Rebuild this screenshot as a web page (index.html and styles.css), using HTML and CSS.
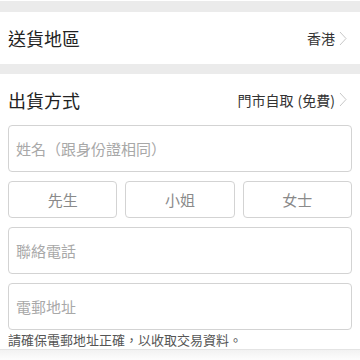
FILE: index.html
```html
<!DOCTYPE html>
<html lang="zh-Hant">
<head>
    <title>送貨資料</title>
    <meta charset="utf-8">
    <link rel="stylesheet" href="styles.css">
</head>
<body>
    <div class="sep sep-top"></div>
    <div class="linha">
        <span class="titulo">送貨地區</span>
        <span class="valor">香港
            <svg class="seta" width="8" height="15" viewBox="0 0 8 15"><polyline points="1,1 7,7.5 1,14" fill="none" stroke="#c8c8c8" stroke-width="1"/></svg>
        </span>
    </div>
    <div class="sep"></div>
    <div class="linha linha-2">
        <span class="titulo">出貨方式</span>
        <span class="valor">門市自取<span class="extra">(免費)</span>
            <svg class="seta" width="8" height="15" viewBox="0 0 8 15"><polyline points="1,1 7,7.5 1,14" fill="none" stroke="#c8c8c8" stroke-width="1"/></svg>
        </span>
    </div>

    <div class="form">
        <div class="campo">姓名（跟身份證相同）</div>
        <div class="titulos">
            <button>先生</button>
            <button>小姐</button>
            <button>女士</button>
        </div>
        <div class="campo">聯絡電話</div>
        <div class="campo">電郵地址</div>
        <p class="dica">請確保電郵地址正確，以收取交易資料。</p>
    </div>
    <div class="rodape"></div>
</body>
</html>
```

FILE: styles.css
```css
body {
    margin: 0;
    font-family: "Noto Sans CJK TC", "Noto Sans", sans-serif;
    background: #fff;
    color: #222;
}

.sep {
    height: 10px;
    background: #ebebeb;
}

.sep-top {
    height: 11px;
    margin-top: 1px;
}

.linha {
    height: 52px;
    padding: 0 13px 0 8px;
    display: flex;
    align-items: center;
    justify-content: space-between;
}

.linha-2 {
    height: 51px;
}

.titulo {
    font-size: 18px;
}

.valor {
    font-size: 14px;
    color: #333;
    display: flex;
    align-items: center;
    gap: 4px;
}

.extra {
    margin-left: 0;
}

.seta {
    display: block;
}

.form {
    padding: 0 8px;
    display: flex;
    flex-direction: column;
    gap: 9px;
}

.campo {
    height: 45px;
    border: 1px solid #d3d3d3;
    border-radius: 4px;
    padding: 0 7px;
    display: flex;
    align-items: center;
    font-size: 15px;
    color: #a8a8a8;
}

.titulos {
    display: grid;
    grid-template-columns: repeat(3, 1fr);
    gap: 8px;
}

button {
    height: 37px;
    border: 1px solid #d3d3d3;
    border-radius: 4px;
    background: #fff;
    font-family: inherit;
    font-size: 15px;
    color: #8a8a8a;
}

.dica {
    margin: -9px 0 0;
    font-size: 13px;
    line-height: 19px;
    color: #555;
}

.rodape {
    height: 12px;
    border-top: 1px solid #e4e4e4;
    background: linear-gradient(#f2f2f2, #fff);
}
```
